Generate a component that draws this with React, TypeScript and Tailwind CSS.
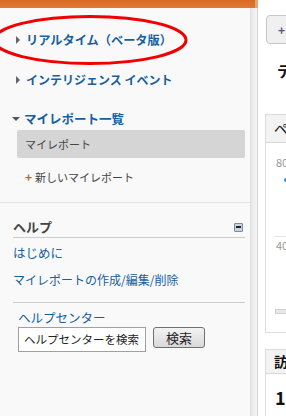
import React from 'react';

const jp = { fontFamily: '"Noto Sans CJK JP", "Liberation Sans", sans-serif' };

function Arrow({ open }: { open?: boolean }) {
  return open ? (
    <svg width="8" height="6" viewBox="0 0 8 6" className="shrink-0">
      <path d="M0 1 L8 1 L4 5 Z" fill="#555" />
    </svg>
  ) : (
    <svg width="6" height="8" viewBox="0 0 6 8" className="shrink-0">
      <path d="M1 0 L5 4 L1 8 Z" fill="#666" />
    </svg>
  );
}

export default function App() {
  return (
    <div className="relative w-[286px] h-[416px] overflow-hidden bg-white flex flex-col" style={jp}>
      {/* top bar */}
      <div className="h-[8px] flex shrink-0">
        <div className="w-[255px] bg-gradient-to-b from-[#d96a22] to-[#e07a30]" />
        <div className="w-[3px] bg-[#e9a36f]" />
      </div>

      <div className="flex flex-1 min-h-0">
        {/* sidebar */}
        <div className="w-[250px] shrink-0 bg-[#f9f9f9] flex flex-col">
          <a className="mt-[22px] h-[20px] flex items-center gap-[5px] pl-[15px] text-[12.2px] font-bold text-[#16609f]">
            <Arrow />
            <span>リアルタイム（ベータ版）</span>
          </a>
          <a className="mt-[20px] h-[20px] flex items-center gap-[5px] pl-[15px] text-[12px] font-bold text-[#16609f]">
            <Arrow />
            <span>インテリジェンス イベント</span>
          </a>
          <a className="mt-[19px] h-[20px] flex items-center gap-[4px] pl-[12px] text-[12.5px] font-bold text-[#16609f]">
            <Arrow open />
            <span>マイレポート一覧</span>
          </a>
          <div className="mt-[1px] ml-[17px] mr-[5px] h-[28px] rounded-[2px] bg-[#d5d5d5] flex items-center pl-[8px] text-[11px] text-[#444]">
            マイレポート
          </div>
          <div className="mt-[9px] h-[20px] flex items-center pl-[25px] gap-[3px] text-[11px] text-[#444]">
            <span className="text-[12px] font-bold text-[#b0702a] leading-none">+</span>
            <span>新しいマイレポート</span>
          </div>
          <div className="mt-[15px] h-px bg-[#e2e2e2]" />

          <div className="mt-[14px] h-[20px] flex items-center justify-between pl-[13px] pr-[7px]">
            <span className="text-[13px] font-bold text-[#444]">ヘルプ</span>
            <span className="w-[9px] h-[9px] border border-[#7f8a99] bg-[#c9d3df] rounded-[1px] flex items-center justify-center">
              <span className="w-[5px] h-[1.5px] bg-[#222]" />
            </span>
          </div>
          <div className="ml-[13px] mr-[5px] h-px bg-[#cccccc]" />
          <a className="mt-[5px] h-[20px] flex items-center pl-[13px] text-[12.5px] text-[#16609f]">はじめに</a>
          <a className="mt-[7px] h-[20px] flex items-center pl-[13px] text-[12px] text-[#16609f]">
            マイレポートの作成/編集/削除
          </a>
          <div className="mt-[12px] ml-[13px] mr-[5px] h-px bg-[#cccccc]" />
          <a className="mt-[6px] h-[18px] flex items-center pl-[18px] text-[12.5px] text-[#16609f]">ヘルプセンター</a>
          <div className="flex items-start gap-[7px] pl-[18px]">
            <div className="w-[128px] h-[25px] border border-[#a0a0a0] bg-white flex items-center pl-[5px] text-[11.5px] text-[#222] whitespace-nowrap overflow-hidden">
              ヘルプセンターを検索
            </div>
            <button className="w-[52px] h-[21px] border border-[#707070] rounded-[3px] bg-gradient-to-b from-[#f3f3f3] to-[#d9d9d9] flex items-center justify-center text-[13px] text-[#222]">
              検索
            </button>
          </div>
        </div>

        {/* divider shadow */}
        <div className="w-[7px] shrink-0 bg-gradient-to-r from-[#e6e6e6] to-[#f6f6f6] border-l border-[#e0e0e0]" />
        <div className="w-px shrink-0 bg-[#d4d4d4]" />

        {/* content */}
        <div className="flex-1 min-w-0 overflow-hidden flex flex-col">
          <div className="mt-[7px] ml-[8px] w-[60px] h-[29px] rounded-[4px] border border-[#c6c6c6] bg-[#f0f0f0] flex items-center pl-[11px] text-[12px] font-bold text-[#6a4a8a]">
            +
          </div>
          <div className="mt-[19px] ml-[19px] text-[15px] font-bold text-[#111] leading-none whitespace-nowrap">テ</div>
          <div className="mt-[36px] ml-[7px] w-[200px] h-[219px] border border-[#dcdcdc] flex flex-col">
            <div className="h-[28px] bg-[#f3f3f3] border-b border-[#d8d8d8] flex items-center pl-[8px] text-[14px] text-[#111]">ペ</div>
            <div className="mt-[14px] ml-[10px] text-[11px] text-[#999] leading-none">80</div>
            <div className="mt-[10px] ml-[18px] w-[4px] h-[4px] rounded-full bg-[#2a8fd6]" />
            <div className="mt-[54px] ml-[8px] h-px bg-[#e6e6e6]" />
            <div className="mt-[3px] ml-[10px] text-[11px] text-[#999] leading-none">40</div>
            <div className="mt-[58px] ml-[9px] w-[40px] h-[5px] bg-[#e8e8e8] border border-[#d0d0d0]" />
          </div>
          <div className="mt-[16px] ml-[7px] w-[200px] flex-1 border border-[#dcdcdc] border-b-0 flex flex-col">
            <div className="h-[24px] bg-[#f3f3f3] border-b border-[#d8d8d8] flex items-center pl-[8px] text-[14px] font-bold text-[#111]">訪</div>
            <div className="mt-[14px] ml-[9px] text-[18px] font-bold text-[#111] leading-none">1</div>
          </div>
        </div>
      </div>

      {/* red annotation */}
      <svg className="absolute left-0 top-0 pointer-events-none" width="286" height="416">
        <ellipse cx="90" cy="40" rx="96" ry="23.5" fill="none" stroke="#f00000" strokeWidth="3" />
      </svg>
    </div>
  );
}
